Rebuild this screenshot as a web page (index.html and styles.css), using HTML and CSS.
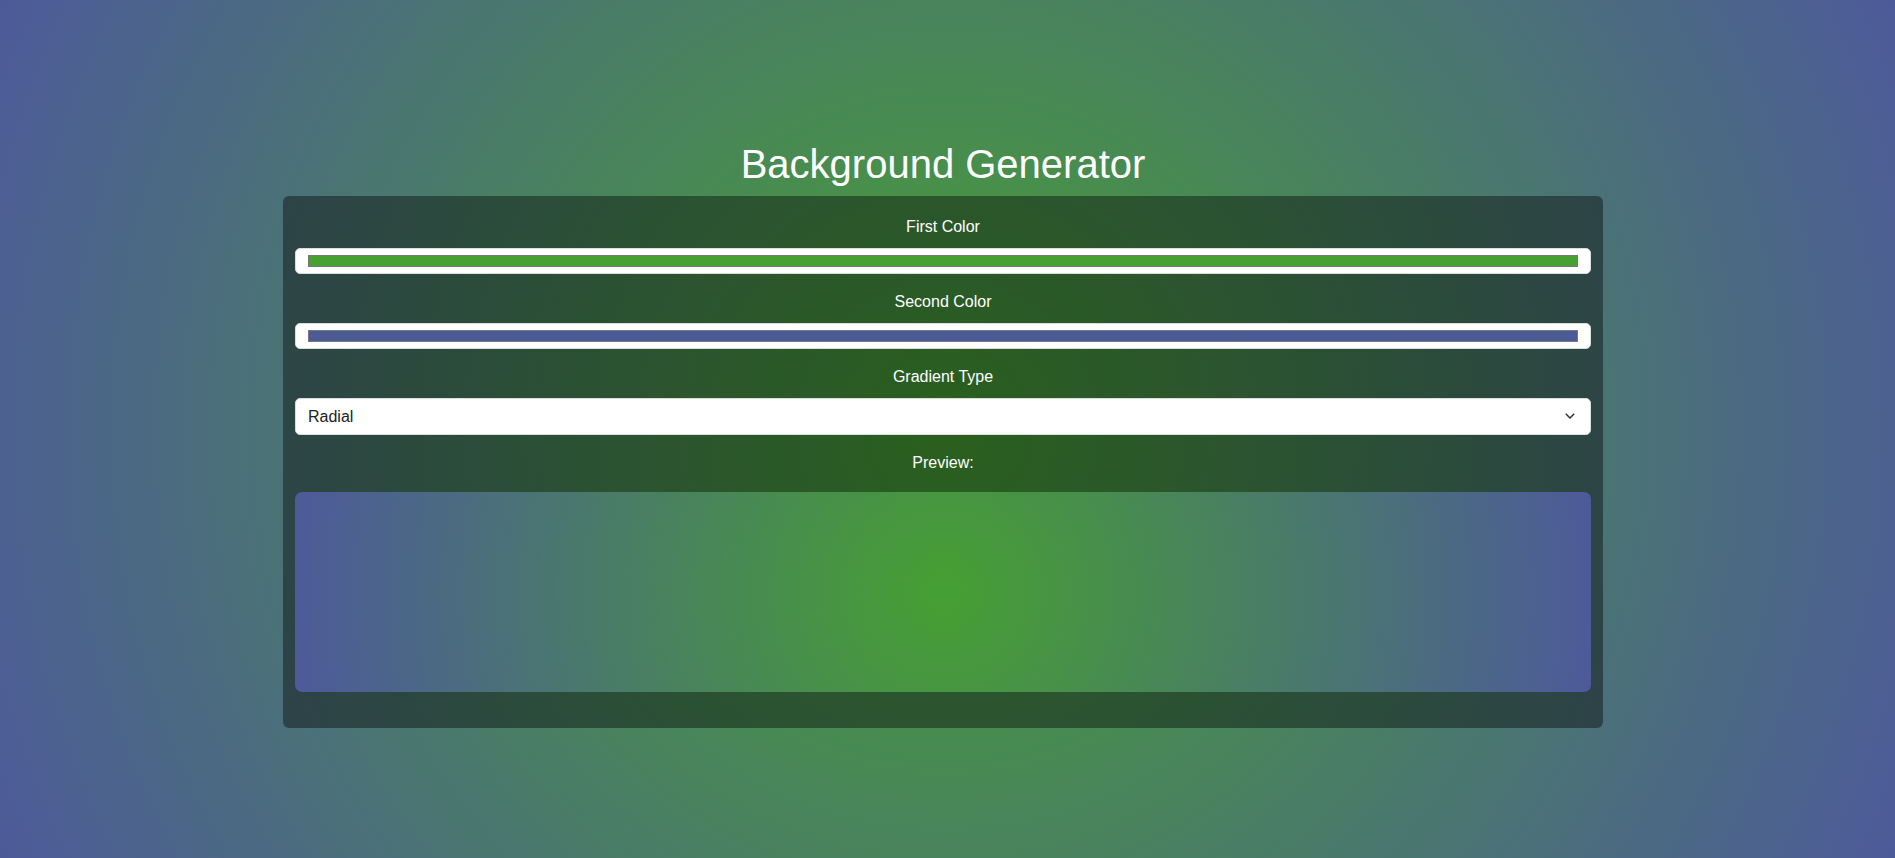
FILE: index.html
```html
<!DOCTYPE html>
<html lang="en">
<head>
<meta charset="utf-8">
<title>Background Generator</title>
<link rel="stylesheet" href="styles.css">
</head>
<body>
<div class="page">
  <h1 class="title">Background Generator</h1>
  <div class="card">
    <div class="field">
      <label class="label" for="c1">First Color</label>
      <input class="color-input" id="c1" type="color" value="#46a032">
    </div>
    <div class="field">
      <label class="label" for="c2">Second Color</label>
      <input class="color-input" id="c2" type="color" value="#4d5a9a">
    </div>
    <div class="field">
      <label class="label" for="type">Gradient Type</label>
      <div class="select-wrap">
        <select class="select" id="type">
          <option>Linear</option>
          <option selected>Radial</option>
        </select>
        <svg class="chevron" width="10" height="6" viewBox="0 0 10 6"><polyline points="0.8,0.8 5,5 9.2,0.8" fill="none" stroke="#333" stroke-width="1.5"/></svg>
      </div>
    </div>
    <div class="preview-label">Preview:</div>
    <div class="preview"></div>
  </div>
</div>
</body>
</html>
```
FILE: styles.css
```css
html, body {
  margin: 0;
  padding: 0;
}
body {
  min-height: 100vh;
  background: radial-gradient(circle, #46a032, #4d5a9a);
  font-family: "Liberation Sans", Arial, sans-serif;
  color: #fff;
}
.page {
  display: flex;
  flex-direction: column;
  align-items: center;
  padding: 141px 9px 0 0;
}
.title {
  margin: 0 0 9px;
  font-size: 40px;
  line-height: 46px;
  font-weight: normal;
  color: #fff;
}
.card {
  width: 1320px;
  box-sizing: border-box;
  padding: 22px 12px 36px;
  background: rgba(0, 0, 0, 0.4);
  border-radius: 6px;
}
.field {
  display: flex;
  flex-direction: column;
  margin-bottom: 19px;
}
.label, .preview-label {
  display: block;
  font-size: 16px;
  line-height: 18px;
  text-align: center;
  margin-bottom: 12px;
}
.preview-label {
  margin-bottom: 20px;
}
.color-input {
  -webkit-appearance: none;
  appearance: none;
  display: block;
  width: 100%;
  height: 26px;
  box-sizing: border-box;
  margin: 0;
  padding: 2px 10px;
  background: #fff;
  border: 1px solid #dcdcdc;
  border-radius: 5px;
}
.color-input::-webkit-color-swatch-wrapper {
  padding: 4px 2px;
}
.color-input::-webkit-color-swatch {
  border: 1px solid #777;
  border-radius: 0;
}
.select-wrap {
  position: relative;
}
.select {
  -webkit-appearance: none;
  appearance: none;
  display: block;
  width: 100%;
  height: 37px;
  box-sizing: border-box;
  margin: 0;
  padding: 0 12px;
  background: #fff;
  border: 1px solid #dcdcdc;
  border-radius: 5px;
  font-family: "Liberation Sans", Arial, sans-serif;
  font-size: 16px;
  color: #222;
}
.chevron {
  position: absolute;
  right: 16px;
  top: 15px;
  pointer-events: none;
}
.preview {
  height: 200px;
  border-radius: 7px;
  background: radial-gradient(circle, #46a032, #4d5a9a);
}
```
